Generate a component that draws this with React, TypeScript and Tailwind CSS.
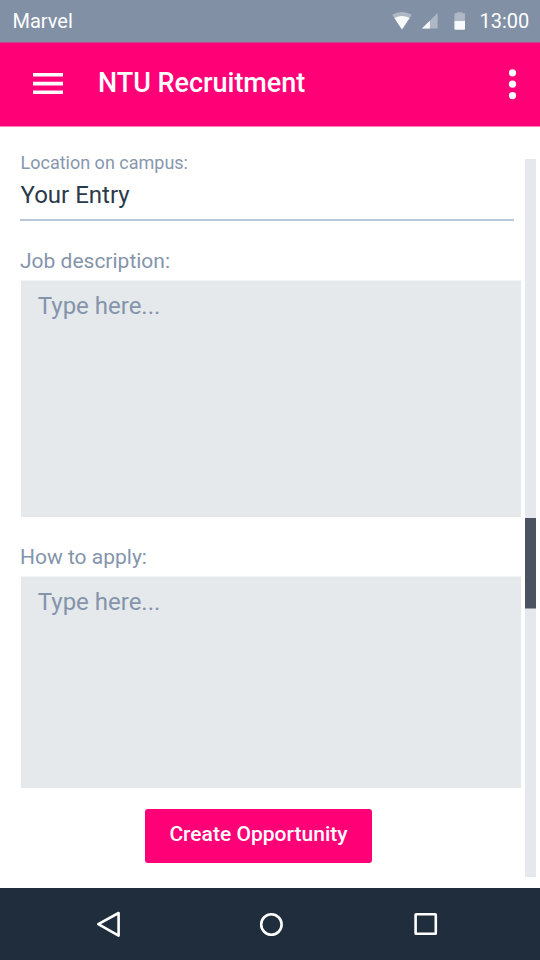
import React from "react";

function StatusBar() {
  return (
    <div className="flex h-[42px] shrink-0 items-start bg-[#8190a5] pl-[12.5px] text-[20px] leading-[42px] text-white">
      <span className="grow">Marvel</span>
      <svg className="mr-[-0.5px] mt-[8px] h-[26px] w-[88px] shrink-0" viewBox="0 8 88 26">
        <path d="M0.2 14.8Q10 9.2 19.8 14.8L10 29.6Z" fill="#aeb8c5" />
        <path d="M2.4 18Q10 14 17.6 18L10 29.6Z" fill="#f8f9fa" />
        <path d="M45.6 13V28.6H30Z" fill="#aeb8c5" />
        <path d="M37.8 20.8V28.6H30Z" fill="#f8f9fa" />
        <path d="M62.4 21V14Q62.4 13.2 63.2 13.2H65V12.2H70.4V13.2H72.2Q73 13.2 73 14V21Z" fill="#aeb8c5" />
        <path d="M62.4 21H73V29Q73 29.8 72.2 29.8H63.2Q62.4 29.8 62.4 29Z" fill="#f8f9fa" />
      </svg>
      <span className="w-[60.5px] shrink-0">13:00</span>
    </div>
  );
}

function Header() {
  return (
    <header className="flex h-[85px] shrink-0 items-start border-b border-t border-b-[#ff80bb] border-t-[#c04a8e] bg-[#ff0077] pl-[33px] text-white">
      <svg className="mt-[30px] h-[22px] w-[30px] shrink-0" viewBox="0 73 30 22" fill="#fff">
        <path d="M0 73h30v3.6H0zM0 81.8h30v3.6H0zM0 90.4h30v3.6H0z" />
      </svg>
      <h1 className="ml-[35px] grow text-[27px] font-medium leading-[81px] tracking-[-0.02px]">NTU Recruitment</h1>
      <svg className="mr-[22px] mt-[25px] h-[34px] w-[12px] shrink-0" viewBox="506 68 12 34" fill="#fff">
        <circle cx="512.5" cy="72.8" r="3.6" />
        <circle cx="512.5" cy="84.2" r="3.6" />
        <circle cx="512.5" cy="95.6" r="3.6" />
      </svg>
    </header>
  );
}

function TextArea({ height }: { height: string }) {
  return (
    <div className={`${height} w-[500.5px] border-t border-[#f2f4f5] bg-[#e5e9ec] pl-[17.3px] text-[24px] leading-[51px] text-[#8494ab]`}>
      Type here...
    </div>
  );
}

export default function App() {
  return (
    <div className="flex h-[960px] w-[540px] flex-col overflow-hidden bg-white font-[Roboto,sans-serif]">
      <StatusBar />
      <Header />
      <main className="flex h-[761px] shrink-0 pl-[20.5px]">
        <form className="flex w-[500.5px] flex-col">
          <label className="mt-[24px] h-[24px] text-[18px] leading-[24px] text-[#8797ae]">Location on campus:</label>
          <div className="-ml-[0.5px] h-[46px] w-[494px] border-b-2 border-[#bac7d8] pl-[0.5px] text-[24px] leading-[40px] text-[#2b3a4a]">
            Your Entry
          </div>
          <label className="-ml-[0.5px] mt-[27px] h-[32px] text-[21px] leading-[27px] text-[#8494ab]">Job description:</label>
          <TextArea height="h-[237px]" />
          <label className="-ml-[0.5px] mt-[27px] h-[32px] text-[21px] leading-[27px] text-[#8494ab]">How to apply:</label>
          <TextArea height="h-[212px]" />
          <button type="button" className="ml-[124.5px] mt-[21px] h-[54px] w-[227px] rounded-[3px] bg-[#ff0077] pb-0.5 text-[21px] font-medium tracking-[0.02px] text-white">
            Create Opportunity
          </button>
        </form>
        <div className="ml-1 mt-[32px] h-[718px] w-[11px] bg-[#e5e9ee] pt-[359px]">
          <div className="h-[91px] border-b border-[#989ea7] bg-[#4a535f]" />
        </div>
      </main>
      <nav className="flex h-[72px] shrink-0 items-center bg-[#1f2d3d]">
        <svg className="h-[72px] w-[540px]" viewBox="0 888 540 72" fill="none" stroke="#fff" strokeWidth="2.6" strokeLinejoin="round">
          <path d="M98.3 924.2L118.6 913V935.6Z" />
          <circle cx="271.4" cy="924.5" r="10.2" />
          <rect x="415.6" y="914.2" width="20.2" height="19.6" rx="0.6" />
        </svg>
      </nav>
    </div>
  );
}
